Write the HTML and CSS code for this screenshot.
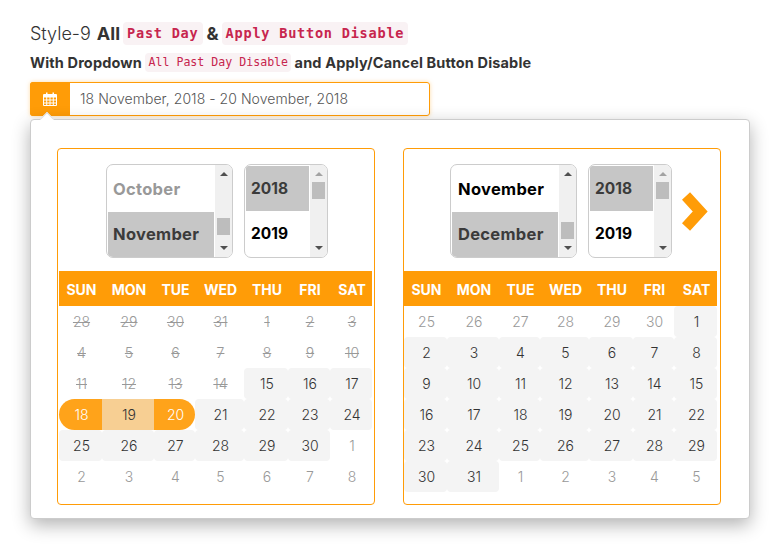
FILE: index.html
```html
<!DOCTYPE html>
<html lang="en">
<head>
<meta charset="utf-8">
<title>Date Range Picker</title>
<link rel="stylesheet" href="styles.css">
</head>
<body>
<main class="page">
  <h4 class="title"><span>Style-9</span><b class="all">All</b><code>Past Day</code><b class="amp">&amp;</b><code>Apply Button Disable</code></h4>
  <h6 class="subtitle"><span>With Dropdown</span><code>All Past Day Disable</code><span>and Apply/Cancel Button Disable</span></h6>
  <div class="input-group">
    <span class="addon">
      <svg width="14" height="14" viewBox="0 0 14 14"><path fill="#fff" fill-rule="evenodd" d="M1 2h2V0.5h1.5V2h5V0.5H11V2h2a1 1 0 0 1 1 1v10a1 1 0 0 1-1 1H1a1 1 0 0 1-1-1V3a1 1 0 0 1 1-1zM1 5.5v2h2.2v-2zM4.2 5.5v2h2.3v-2zM7.5 5.5v2h2.3v-2zM10.8 5.5v2H13v-2zM1 8.5v2h2.2v-2zM4.2 8.5v2h2.3v-2zM7.5 8.5v2h2.3v-2zM10.8 8.5v2H13v-2zM1 11.500v1.500h2.200v-1.500zM4.200 11.500v1.500h2.300v-1.500zM7.500 11.500v1.500h2.300v-1.500zM10.800 11.500v1.500H13v-1.500z"/></svg>
    </span>
    <span class="value">18 November, 2018 - 20 November, 2018</span>
  </div>
  <section class="popup">
    <span class="caret"></span>
    <div class="card">
      <div class="selects left">
        <div class="listbox month">
          <div class="options">
            <div class="opt off">October</div>
            <div class="opt sel">November</div>
          </div>
          <div class="bar"><i class="up"></i><i class="thumb t-nov"></i><i class="down"></i></div>
        </div>
        <div class="listbox year">
          <div class="options">
            <div class="opt sel">2018</div>
            <div class="opt">2019</div>
          </div>
          <div class="bar"><i class="up dim"></i><i class="thumb t-year"></i><i class="down"></i></div>
        </div>
      </div>
      <div class="cal cal-left">
        <div class="head"><span>SUN</span><span>MON</span><span>TUE</span><span>WED</span><span>THU</span><span>FRI</span><span>SAT</span></div>
        <div class="days">
          <span class="past">28</span><span class="past">29</span><span class="past">30</span><span class="past">31</span><span class="past">1</span><span class="past">2</span><span class="past">3</span>
          <span class="past">4</span><span class="past">5</span><span class="past">6</span><span class="past">7</span><span class="past">8</span><span class="past">9</span><span class="past">10</span>
          <span class="past">11</span><span class="past">12</span><span class="past">13</span><span class="past">14</span><span class="on">15</span><span class="on">16</span><span class="on">17</span>
          <span class="start">18</span><span class="range">19</span><span class="end">20</span><span class="on">21</span><span class="on">22</span><span class="on">23</span><span class="on">24</span>
          <span class="on">25</span><span class="on">26</span><span class="on">27</span><span class="on">28</span><span class="on">29</span><span class="on">30</span><span class="other">1</span>
          <span class="other">2</span><span class="other">3</span><span class="other">4</span><span class="other">5</span><span class="other">6</span><span class="other">7</span><span class="other">8</span>
        </div>
      </div>
    </div>
    <div class="card">
      <div class="selects right">
        <div class="listbox month">
          <div class="options">
            <div class="opt">November</div>
            <div class="opt sel">December</div>
          </div>
          <div class="bar"><i class="up"></i><i class="thumb t-dec"></i><i class="down"></i></div>
        </div>
        <div class="listbox year">
          <div class="options">
            <div class="opt sel">2018</div>
            <div class="opt">2019</div>
          </div>
          <div class="bar"><i class="up dim"></i><i class="thumb t-year"></i><i class="down"></i></div>
        </div>
        <svg class="next" width="26" height="39" viewBox="0 0 26 39"><polyline points="4,4 18.200,19.500 4,35" fill="none" stroke="#ff9c07" stroke-width="11"/></svg>
      </div>
      <div class="cal cal-right">
        <div class="head"><span>SUN</span><span>MON</span><span>TUE</span><span>WED</span><span>THU</span><span>FRI</span><span>SAT</span></div>
        <div class="days">
          <span class="other">25</span><span class="other">26</span><span class="other">27</span><span class="other">28</span><span class="other">29</span><span class="other">30</span><span class="on">1</span>
          <span class="on">2</span><span class="on">3</span><span class="on">4</span><span class="on">5</span><span class="on">6</span><span class="on">7</span><span class="on">8</span>
          <span class="on">9</span><span class="on">10</span><span class="on">11</span><span class="on">12</span><span class="on">13</span><span class="on">14</span><span class="on">15</span>
          <span class="on">16</span><span class="on">17</span><span class="on">18</span><span class="on">19</span><span class="on">20</span><span class="on">21</span><span class="on">22</span>
          <span class="on">23</span><span class="on">24</span><span class="on">25</span><span class="on">26</span><span class="on">27</span><span class="on">28</span><span class="on">29</span>
          <span class="on">30</span><span class="on">31</span><span class="other">1</span><span class="other">2</span><span class="other">3</span><span class="other">4</span><span class="other">5</span>
        </div>
      </div>
    </div>
  </section>
</main>
</body>
</html>
```
FILE: styles.css
```css
* { box-sizing: border-box; }
html, body { margin: 0; height: 100%; overflow: hidden; }
body { background: #fff; color: #333; font-family: Inter, "Open Sans", sans-serif; }
.page { padding: 20px 0 0 30px; width: 782px; }

code {
  font-family: "DejaVu Sans Mono", "Liberation Mono", monospace;
  color: #c7254e;
  background: #f9f2f4;
  border-radius: 4px;
}
.title {
  margin: 0;
  height: 27px;
  display: flex;
  align-items: center;
  gap: 3px;
  font-size: 18px;
  font-weight: 300;
  white-space: pre;
}
.title b { font-weight: 700; }
.title .all { margin-left: 3px; }
.title .amp { margin-left: 1px; }
.title code { font-size: 13.600px; letter-spacing: .75px; font-weight: 700; padding: 3px 4px; line-height: 17px; }
.subtitle {
  margin: 6px 0 0;
  height: 19px;
  display: flex;
  align-items: center;
  gap: 3.500px;
  font-size: 14.500px;
  letter-spacing: .15px;
  font-weight: 700;
  white-space: pre;
}
.subtitle code { font-size: 11.600px; letter-spacing: 0; font-weight: 400; padding: 3px; line-height: 13px; }

.input-group {
  margin-top: 10px;
  width: 400px;
  height: 34px;
  display: flex;
  border: 1px solid #ff9c07;
  border-radius: 3px;
  box-shadow: 0 0 4px rgba(255, 156, 7, .35);
}
.addon {
  width: 40px;
  margin: -1px 0 -1px -1px;
  background: #ff9c07;
  border-radius: 3px 0 0 3px;
  display: flex;
  align-items: center;
  justify-content: center;
}
.value {
  padding-left: 10px;
  line-height: 32px;
  font-size: 14px;
  letter-spacing: .05px;
  font-weight: 300;
  color: #555;
  white-space: nowrap;
}

.popup {
  position: relative;
  margin-top: 3px;
  width: 720px;
  height: 400px;
  padding: 28px 0 0 26px;
  display: flex;
  gap: 28px;
  background: #fff;
  border: 1px solid #ccc;
  border-radius: 4px;
  box-shadow: 0 6px 18px rgba(0, 0, 0, .3);
}
.caret {
  position: absolute;
  left: 11px;
  top: -6px;
  width: 10px;
  height: 10px;
  background: #fff;
  border-top: 1px solid #ddd;
  border-left: 1px solid #ddd;
  transform: rotate(45deg);
}
.card {
  width: 318px;
  height: 357px;
  padding-top: 15px;
  border: 1px solid #ff9c07;
  border-radius: 4px;
}

.selects { display: flex; gap: 11px; height: 94px; }
.selects.left { margin-left: 48px; }
.selects.right { margin-left: 46px; }
.next { align-self: center; margin-left: -1px; }

.listbox {
  height: 94px;
  display: flex;
  border: 1px solid #ccc;
  border-radius: 7px;
  overflow: hidden;
  font-weight: 700;
  color: #000;
  padding: 1px 0 0 1px;
}
.listbox.month { width: 127px; font-size: 16.500px; letter-spacing: .3px; }
.listbox.year { width: 84px; font-size: 15.500px; }
.options { flex: 1; }
.opt { display: flex; align-items: center; padding-left: 5px; height: 45px; }
.listbox.month .opt:first-child { height: 46px; }
.listbox.month .sel { padding-bottom: 2px; }
.selects.right .month .opt { padding-left: 6px; }
.sel { background: #c6c6c6; color: #3b3b3b; }
.off { color: #999; }
.bar {
  position: relative;
  width: 17px;
  margin: -1px 0 0 1px;
  background: #f0f0f0;
}
.bar i { position: absolute; left: 2px; display: block; }
.thumb { width: 13px; height: 17px; background: #bdbdbd; }
.t-nov { top: 53px; }
.t-dec { top: 57px; }
.t-year { top: 17px; }
.up, .down {
  left: 4.500px !important;
  width: 0;
  height: 0;
  border-left: 4px solid transparent;
  border-right: 4px solid transparent;
}
.up { top: 7px; border-bottom: 4px solid #505050; }
.down { top: 81px; border-top: 4px solid #505050; }
.up.dim { border-bottom-color: #a3a3a3; }

.cal { margin-top: 13px; width: 313px; }
.cal-left { margin-left: 1px; }
.cal-right { margin-left: 0; }
.head, .days { display: grid; }
.cal-left .head, .cal-left .days { grid-template-columns: 43px 52px 41px 49px 44px 42px 42px; }
.cal-right .head, .cal-right .days { grid-template-columns: 43px 52px 41px 49px 44px 41px 43px; }
.head {
  height: 35px;
  background: #ff9c07;
  color: #fff;
  font-size: 14px;
  font-weight: 700;
}
.head span { display: flex; align-items: center; justify-content: center; padding: 2px 0 0 2px; }
.days { grid-auto-rows: 31px; font-size: 14px; font-weight: 350; }
.days span { display: flex; align-items: center; justify-content: center; padding-left: 2px; }
.past { color: #999; text-decoration: line-through; }
.other { color: #999; }
.on { background: #f4f4f4; color: #333; border-radius: 4px; }
.start, .end { background: #ffa31a; color: #fff; }
.start { border-radius: 16px 0 0 16px; }
.end { border-radius: 0 16px 16px 0; }
.range { background: #f7cf93; color: #333; }
```
